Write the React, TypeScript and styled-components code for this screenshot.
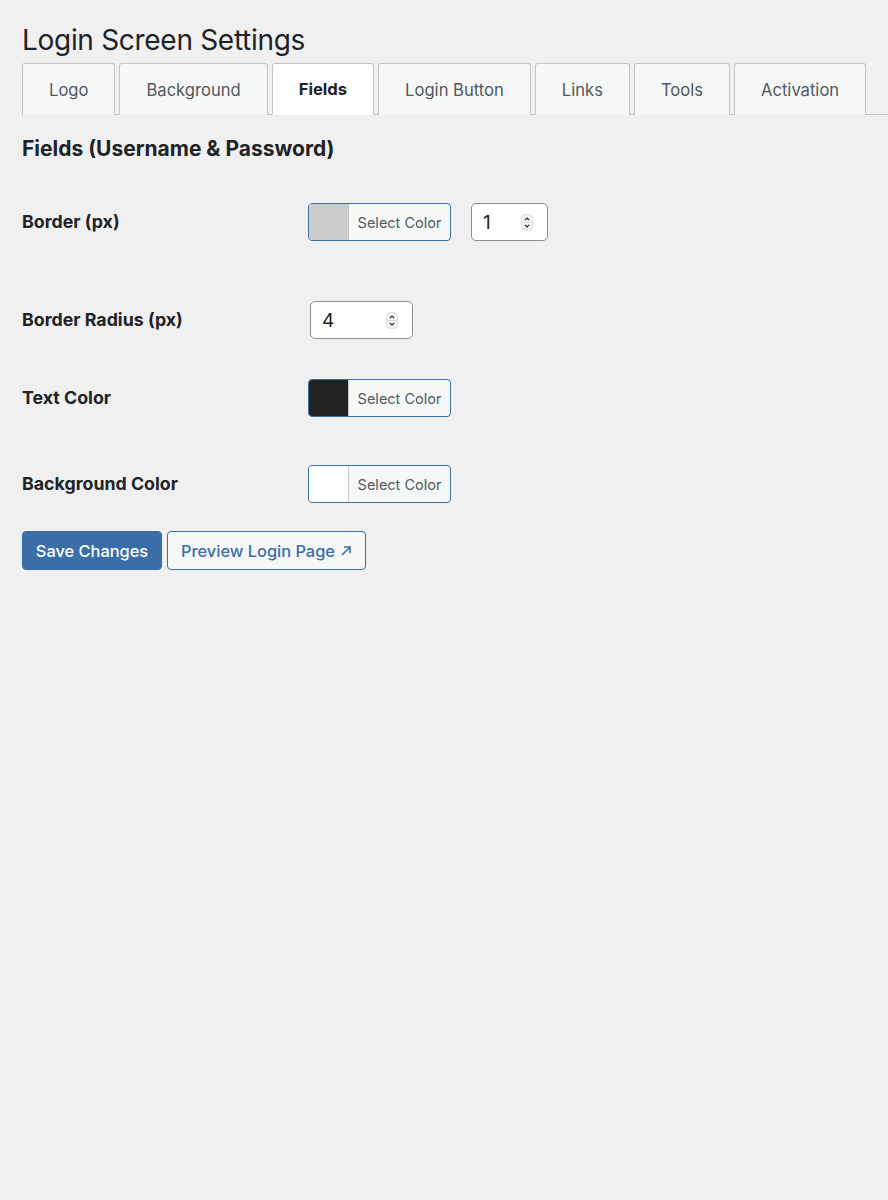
import React from "react";
import styled, { createGlobalStyle } from "styled-components";

const Global = createGlobalStyle`
  html, body { margin: 0; padding: 0; background: #f0f0f1; }
  body { font-family: Inter, "Noto Sans", "Liberation Sans", sans-serif; color: #1d2327; }
  * { box-sizing: border-box; }
`;

const Page = styled.div`
  min-height: 1200px;
  padding: 22px 0 0 22px;
`;

const Title = styled.h1`
  margin: 0;
  font-size: 28px;
  line-height: 36px;
  font-weight: 400;
  color: #1d2327;
  letter-spacing: -0.3px;
`;

const TabBar = styled.nav`
  display: flex;
  gap: 4px;
  margin-top: 5px;
  border-bottom: 1px solid #c3c4c7;
  height: 52px;
`;

const Tab = styled.a<{ $active?: boolean }>`
  display: flex;
  align-items: center;
  justify-content: center;
  height: 52px;
  padding: 0 26px;
  border: 1px solid #c3c4c7;
  border-bottom: ${(p) => (p.$active ? "1px solid #ffffff" : "none")};
  border-radius: 3px 3px 0 0;
  background: ${(p) => (p.$active ? "#ffffff" : "#f6f7f7")};
  color: ${(p) => (p.$active ? "#1d2327" : "#50575e")};
  font-size: 16.6px;
  font-weight: ${(p) => (p.$active ? 700 : 400)};
  text-decoration: none;
  white-space: nowrap;
  margin-bottom: -1px;
`;

const Section = styled.h2`
  margin: 20px 0 0;
  font-size: 21px;
  line-height: 28px;
  font-weight: 700;
  color: #1d2327;
`;

const Row = styled.div<{ $gap: number }>`
  display: flex;
  align-items: center;
  margin-top: ${(p) => p.$gap}px;
`;

const Label = styled.div`
  width: 286px;
  flex: none;
  font-size: 17.8px;
  font-weight: 700;
  color: #1d2327;
  margin-top: -2px;
`;

const Controls = styled.div`
  display: flex;
  align-items: center;
  gap: 20px;
`;

const Picker = styled.button`
  display: flex;
  height: 38px;
  width: 143px;
  padding: 0;
  border: 1px solid #3a6ea8;
  border-radius: 4px;
  overflow: hidden;
  background: #f6f7f7;
  font-family: inherit;
  cursor: pointer;
`;

const Swatch = styled.span<{ $color: string }>`
  width: 40px;
  flex: none;
  background: ${(p) => p.$color};
  border-right: 1px solid #c3c4c7;
`;

const PickerText = styled.span`
  flex: 1;
  display: flex;
  align-items: center;
  justify-content: center;
  font-size: 14.5px;
  color: #50575e;
`;

const NumberBox = styled.div<{ $w: number; $shift?: number }>`
  display: flex;
  align-items: center;
  justify-content: space-between;
  width: ${(p) => p.$w}px;
  height: 38px;
  margin-left: ${(p) => p.$shift ?? 0}px;
  padding: 0 14px 0 11px;
  background: #fff;
  border: 1px solid #8c8f94;
  border-radius: 5px;
  font-size: 19px;
  color: #1d2327;
`;

const Buttons = styled.div`
  display: flex;
  gap: 5px;
  margin-top: 28px;
`;

const Primary = styled.button`
  height: 39px;
  width: 140px;
  border: 1px solid #3a6ea8;
  border-radius: 4px;
  background: #3a6ea8;
  color: #fff;
  font-family: inherit;
  font-size: 16.4px;
  font-weight: 500;
`;

const Secondary = styled.button`
  height: 39px;
  width: 199px;
  border: 1px solid #3a6ea8;
  border-radius: 4px;
  background: #f6f7f7;
  color: #3a6ea8;
  font-family: inherit;
  font-size: 16.4px;
  font-weight: 500;
  display: flex;
  align-items: center;
  justify-content: center;
  gap: 5px;
`;

const Spinner = () => (
  <svg width="12" height="17" viewBox="0 0 12 17">
    <rect x="0.5" y="0.5" width="11" height="16" rx="4" fill="#f6f7f7" stroke="#dcdcde" />
    <line x1="1" y1="8.5" x2="11" y2="8.5" stroke="#dcdcde" />
    <path d="M3.8 6.2 L6 4 L8.2 6.2" fill="none" stroke="#1d2327" strokeWidth="1.2" />
    <path d="M3.8 10.8 L6 13 L8.2 10.8" fill="none" stroke="#1d2327" strokeWidth="1.2" />
  </svg>
);

const Arrow = () => (
  <svg width="12" height="12" viewBox="0 0 12 12">
    <path d="M2 10 L10 2 M4 2 H10 V8" fill="none" stroke="#3a6ea8" strokeWidth="1.6" />
  </svg>
);

const ColorPicker = ({ color }: { color: string }) => (
  <Picker type="button">
    <Swatch $color={color} />
    <PickerText>Select Color</PickerText>
  </Picker>
);

const tabs = ["Logo", "Background", "Fields", "Login Button", "Links", "Tools", "Activation"];

export default function App() {
  return (
    <>
      <Global />
      <Page>
        <Title>Login Screen Settings</Title>
        <TabBar>
          {tabs.map((t) => (
            <Tab key={t} $active={t === "Fields"}>
              {t}
            </Tab>
          ))}
        </TabBar>
        <Section>Fields (Username &amp; Password)</Section>
        <Row $gap={40}>
          <Label>Border (px)</Label>
          <Controls>
            <ColorPicker color="#cccccc" />
            <NumberBox $w={77}>
              <span>1</span>
              <Spinner />
            </NumberBox>
          </Controls>
        </Row>
        <Row $gap={60}>
          <Label>Border Radius (px)</Label>
          <NumberBox $w={103} $shift={2}>
            <span>4</span>
            <Spinner />
          </NumberBox>
        </Row>
        <Row $gap={40}>
          <Label>Text Color</Label>
          <ColorPicker color="#222222" />
        </Row>
        <Row $gap={48}>
          <Label>Background Color</Label>
          <ColorPicker color="#ffffff" />
        </Row>
        <Buttons>
          <Primary type="button">Save Changes</Primary>
          <Secondary type="button">
            Preview Login Page <Arrow />
          </Secondary>
        </Buttons>
      </Page>
    </>
  );
}
